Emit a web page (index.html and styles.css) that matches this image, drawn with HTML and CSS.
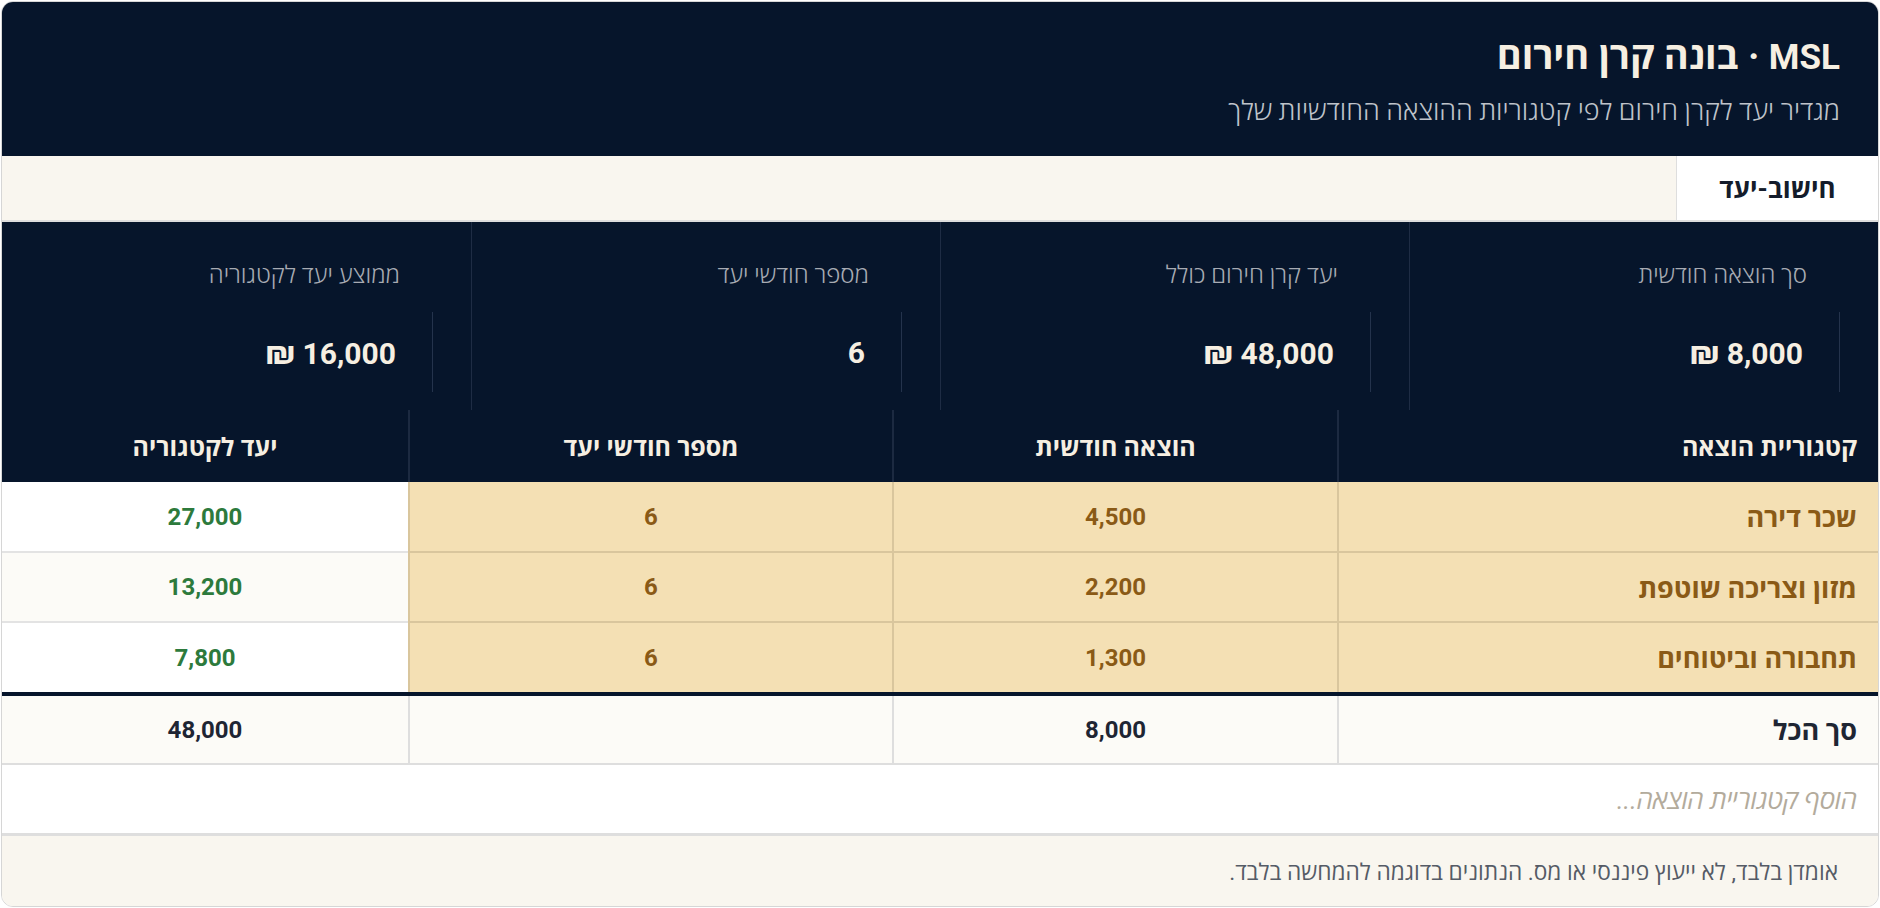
FILE: index.html
```html
<!DOCTYPE html>
<html lang="he" dir="rtl">
<head>
<meta charset="utf-8">
<title>MSL · בונה קרן חירום</title>
<link rel="stylesheet" href="styles.css">
</head>
<body>
<div class="card">
  <header class="hero">
    <h1 class="title"><span class="brand">MSL</span> · בונה קרן חירום</h1>
    <p class="subtitle">מגדיר יעד לקרן חירום לפי קטגוריות ההוצאה החודשיות שלך</p>
  </header>
  <nav class="tabs">
    <div class="tab active">חישוב-יעד</div>
  </nav>
  <section class="stats">
    <div class="stat">
      <div class="stat-label">סך הוצאה חודשית</div>
      <div class="stat-box"><span class="stat-value">8,000 <span class="cur">₪</span></span></div>
    </div>
    <div class="stat">
      <div class="stat-label">יעד קרן חירום כולל</div>
      <div class="stat-box"><span class="stat-value">48,000 <span class="cur">₪</span></span></div>
    </div>
    <div class="stat">
      <div class="stat-label">מספר חודשי יעד</div>
      <div class="stat-box"><span class="stat-value">6</span></div>
    </div>
    <div class="stat">
      <div class="stat-label">ממוצע יעד לקטגוריה</div>
      <div class="stat-box"><span class="stat-value">16,000 <span class="cur">₪</span></span></div>
    </div>
  </section>
  <table class="grid">
    <colgroup>
      <col class="c1"><col class="c2"><col class="c3"><col class="c4">
    </colgroup>
    <thead>
      <tr>
        <th class="start">קטגוריית הוצאה</th>
        <th>הוצאה חודשית</th>
        <th>מספר חודשי יעד</th>
        <th>יעד לקטגוריה</th>
      </tr>
    </thead>
    <tbody>
      <tr class="odd">
        <td class="start input">שכר דירה</td>
        <td class="input">4,500</td>
        <td class="input">6</td>
        <td class="result">27,000</td>
      </tr>
      <tr class="even">
        <td class="start input">מזון וצריכה שוטפת</td>
        <td class="input">2,200</td>
        <td class="input">6</td>
        <td class="result">13,200</td>
      </tr>
      <tr class="odd last">
        <td class="start input">תחבורה וביטוחים</td>
        <td class="input">1,300</td>
        <td class="input">6</td>
        <td class="result">7,800</td>
      </tr>
    </tbody>
    <tfoot>
      <tr class="total">
        <td class="start">סך הכל</td>
        <td>8,000</td>
        <td></td>
        <td>48,000</td>
      </tr>
    </tfoot>
  </table>
  <div class="add-row">הוסף קטגוריית הוצאה...</div>
  <footer class="note">אומדן בלבד, לא ייעוץ פיננסי או מס. הנתונים בדוגמה להמחשה בלבד.</footer>
</div>
</body>
</html>
```
FILE: styles.css
```css
* { box-sizing: border-box; }
html, body { margin: 0; padding: 0; background: #ffffff; }
body {
  padding: 1px;
  font-family: Roboto, "Open Sans", sans-serif;
  color: #1e2533;
}
.card {
  border: 1px solid #d6d6d6;
  border-radius: 12px;
  overflow: hidden;
  background: #ffffff;
  height: 906px;
  display: flex;
  flex-direction: column;
}
.hero {
  background: #06152b;
  height: 154px;
  padding: 32px 38px 0 38px;
}
.title {
  margin: 0;
  font-size: 38px;
  font-weight: 700;
  line-height: 44px;
  color: #f6efe2;
}
.brand { font-size: 35px; }
.subtitle {
  margin: 14px 0 0 0;
  font-size: 27px;
  font-weight: 300;
  line-height: 34px;
  color: #bfc3ca;
}
.tabs {
  display: flex;
  background: #f9f6ef;
  height: 66px;
  border-bottom: 2px solid #dedede;
}
.tab {
  width: 202px;
  display: flex;
  align-items: center;
  justify-content: center;
  font-size: 26px;
  font-weight: 700;
  color: #141c2b;
}
.tab.active {
  background: #ffffff;
  border-left: 1px solid #dedede;
}
.stats {
  display: grid;
  grid-template-columns: repeat(4, 1fr);
  background: #06152b;
  height: 188px;
}
.stat {
  border-left: 1px solid #1e2c44;
  padding: 38px 38px 0 38px;
}
.stat:last-child { border-left: none; }
.stat-label {
  margin-right: 33px;
  font-size: 24px;
  font-weight: 300;
  line-height: 30px;
  color: #a7abb3;
}
.stat-box {
  margin-top: 22px;
  height: 80px;
  border-right: 1px solid #24334c;
  padding-right: 36px;
  display: flex;
  align-items: center;
}
.stat-value {
  font-size: 30px;
  font-weight: 700;
  color: #f6efe2;
}
.cur { font-size: 34px; }
.grid {
  width: 100%;
  border-collapse: collapse;
  table-layout: fixed;
}
.c1 { width: 540px; }
.c2 { width: 445px; }
.c3 { width: 484px; }
.c4 { width: auto; }
.grid th {
  background: #06152b;
  color: #f6efe2;
  height: 72px;
  font-size: 25px;
  font-weight: 700;
  text-align: center;
  padding: 0 20px;
  border-left: 2px solid #1c2a41;
}
.grid th:last-child { border-left: none; }
.grid th.start, .grid td.start { text-align: right; padding-right: 21px; }
.grid td {
  height: 70px;
  font-size: 24px;
  font-weight: 700;
  text-align: center;
  padding: 0 20px;
}
.grid td.start { font-size: 27px; }
.grid td.input {
  background: #f4e0b4;
  color: #8a5a16;
  border-left: 2px solid #d9c69d;
  border-bottom: 2px solid #d9c69d;
}
.grid td.result {
  color: #2d7a3c;
  border-bottom: 2px solid #e3e3e3;
}
.grid tr.odd td.result { background: #ffffff; }
.grid tr.even td.result { background: #fcfbf7; }
.grid tr.last td { border-bottom: 4px solid #06152b; height: 72px; }
.grid tr.total td {
  background: #fcfbf7;
  color: #1e2533;
  height: 70px;
  border-left: 2px solid #dedede;
  border-bottom: 2px solid #dedede;
}
.grid tr.total td:last-child { border-left: none; }
.add-row {
  height: 71px;
  display: flex;
  align-items: center;
  padding-right: 21px;
  font-size: 26px;
  font-style: italic;
  color: #b3ab9c;
  border-bottom: 3px solid #dedede;
}
.note {
  flex: 1;
  background: #f9f6ef;
  display: flex;
  align-items: center;
  padding-right: 40px;
  font-size: 22.7px;
  color: #555b66;
}
```
